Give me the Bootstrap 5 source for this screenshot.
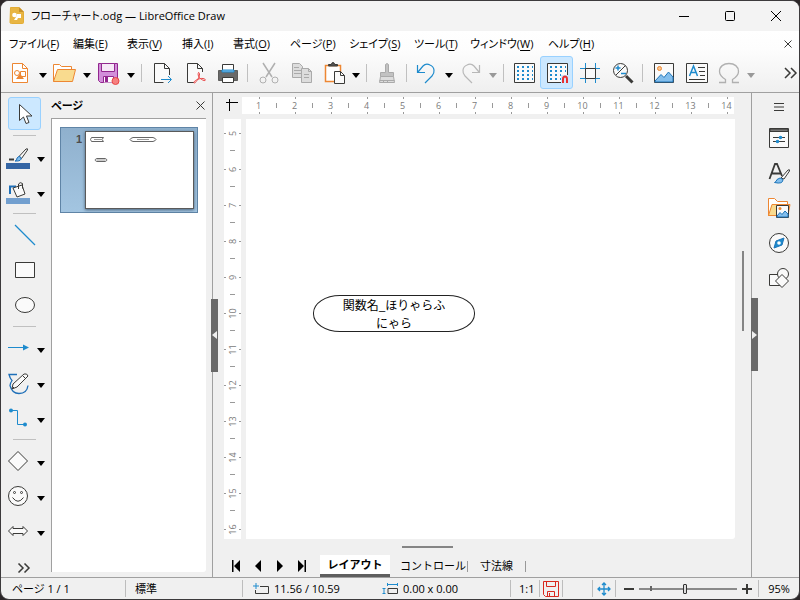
<!DOCTYPE html>
<html lang="ja">
<head>
<meta charset="utf-8">
<meta name="viewport" content="width=device-width, initial-scale=1">
<title>フローチャート.odg — LibreOffice Draw</title>
<link href="https://cdn.jsdelivr.net/npm/bootstrap@5.3.0/dist/css/bootstrap.min.css" rel="stylesheet">
<style>
:root { --line: #a0a0a0; --face: #f0f0f0; --ink: #3a3a38; --blue: #1e8bcd; }
html, body { height: 100%; }
body { background: #2b2628; font: 11px/16px "Open Sans", "Noto Sans CJK JP", sans-serif; font-feature-settings: "palt"; color: #000; overflow: hidden; }
button, a { color: inherit; text-decoration: none; }
button { border: 0; background: none; padding: 0; }
svg { display: block; fill: none; stroke: var(--ink); flex: none; }
.app-window { border: 1px solid #3c3a3c; border-radius: 9px; background: var(--face); overflow: hidden; }
.title-bar { height: 30px; background: #f3f3f3; padding-left: 8px; gap: 6px; }
.caption-btn { width: 46px; height: 30px; }
.caption-btn svg { stroke: #000; }
.top-bars { background: linear-gradient(#fff, #fdfdfd 30%, #efefef); border-bottom: 1px solid var(--line); }
.menu-strip { height: 25px; padding-left: 8px; display: grid; grid-template-columns: 64px 54px 55px 51px 57px 59px 65px 56px 78px 1fr auto; }
.menu-strip u { text-underline-offset: 2px; }
.menu-strip button { margin-right: 7px; }
.tool-strip { height: 36px; padding-left: 3px; padding-bottom: 3px; }
.tool { width: 33px; height: 33px; border: 1px solid transparent; border-radius: 3px; display: flex; align-items: center; justify-content: center; flex: none; }
.tool.on { background: #cce8ff; border-color: #99d1ff; }
.drop { width: 11px; height: 33px; display: flex; align-items: center; justify-content: center; flex: none; }
.drop::after { content: ""; border: 4px solid transparent; border-top: 5px solid #000; border-bottom: 0; margin-top: 5px; }
.drop:disabled::after { border-top-color: #999; }
.gap-line { width: 7px; height: 18px; flex: none; background: linear-gradient(#c0c0c0, #c0c0c0) center / 1px 100% no-repeat; }
.drop + .gap-line { margin-left: 2px; }
.draw-tools { width: 50px; padding-top: 3px; }
.draw-row { height: 35px; display: flex; align-items: center; flex: none; }
.draw-row .tool { margin-left: 7px; }
.draw-row.split .tool { margin-left: 0; }
.draw-row .drop { margin-left: 1px; }
.rule-h { height: 8px; width: 23px; margin-left: 12px; flex: none; background: linear-gradient(#c0c0c0, #c0c0c0) center / 100% 1px no-repeat; }
.page-panel { width: 155px; padding-bottom: 5px; }
.panel-head { height: 25px; }
.page-list { background: #fff; border-left: 1px solid var(--line); border-top: 1px solid var(--line); border-bottom-right-radius: 3px; padding: 8px; }
.page-thumb { border: 1px solid #5f84a6; background: linear-gradient(#8fb0cd, #a3c5e1); padding: 3px; height: 86px; }
.page-thumb b { width: 21px; color: #4c4c4c; text-align: right; padding-right: 3px; font: bold 11px/16px "Liberation Sans", sans-serif; }
.page-sheet { background: #fff; border: 1px solid #5a5a5a; box-shadow: 0 1px 3px #47617a; }
.splitter { width: 14px; flex: none; background: linear-gradient(var(--line), var(--line)) 6px 0 / 1px 100% no-repeat; padding-left: 5px; }
.grip { width: 7px; height: 73px; background: #696969; display: flex; align-items: center; justify-content: center; }
.grip svg { stroke: none; fill: #f0f0f0; }
.editor { padding-top: 4px; }
.ruler-row { margin-bottom: 5px; }
.corner { width: 22px; }
.ruler-h { height: 17px; background: #fff; overflow: hidden; margin-right: 17px; color: #7b7b7b; font-size: 9px; }
.ruler-h span { flex: none; width: 36px; padding-right: 1px; text-align: center; line-height: 17px;
  background: linear-gradient(#999,#999) 18px 0 / 1px 2px no-repeat, linear-gradient(#999,#999) 18px 100% / 1px 2px no-repeat, linear-gradient(#999,#999) 100% 6px / 1px 5px no-repeat; }
.ruler-h span:first-child { margin-left: -1px; }
.ruler-v { width: 17px; margin: 0 5px 0 4px; background: #fff; overflow: hidden; color: #7b7b7b; font-size: 9px; }
.ruler-v span { flex: none; height: 36px; display: flex; align-items: center; justify-content: center;
  background: linear-gradient(#999,#999) 0 18px / 2px 1px no-repeat, linear-gradient(#999,#999) 100% 18px / 2px 1px no-repeat, linear-gradient(#999,#999) 6px 100% / 5px 1px no-repeat; }
.ruler-v span:first-child { margin-top: -4px; }
.ruler-v i { font-style: normal; line-height: 17px; transform: rotate(-90deg); }
.sheet { background: #fff; border-bottom-right-radius: 3px; }
.terminator { position: absolute; left: 67px; top: 176px; width: 162px; height: 37px; border: 1px solid #222; border-radius: 27px / 18px; font: 12px/18px "Noto Sans CJK JP", sans-serif; text-align: center; }
.scroll-v { width: 16px; padding: 132px 0 0 7px; }
.scroll-v div { width: 2px; height: 80px; background: #858585; }
.scroll-h { height: 16px; padding: 7px 0 0 182px; }
.scroll-h div { width: 51px; height: 2px; background: #858585; }
.layer-tabs { height: 22px; padding-left: 5px; }
.layer-tabs > button:not(.layer) { width: 22px; height: 20px; display: flex; align-items: center; justify-content: center; }
.layer-tabs svg { fill: #000; stroke: none; }
.layer { height: 22px; padding: 0 1px; margin-left: 9px; }
.tab-line + .layer { margin: 0 11px; }
.layer.current { background: #fff; border-bottom: 3px solid #5f5f5f; padding: 0; width: 70px; margin-left: 7px; font-weight: 600; }
.tab-line { width: 1px; height: 11px; background: #999; }
.side-bar { width: 48px; border-left: 1px solid var(--line); padding-left: 7px; }
.side-bar .grip { position: absolute; left: -1px; top: 50%; margin-top: -37px; }
.side-bar > button:not(.grip) { height: 35px; display: flex; align-items: center; justify-content: center; }
.side-bar > button.side-menu { height: 27px; }
.status { height: 22px; border-top: 1px solid var(--line); }
.status > * { height: 17px; display: flex; align-items: center; flex: none; }
.status > * + * { border-left: 1px solid #bdbdbd; }
.s-page { width: 124px; padding-left: 11px; }
.s-style { width: 117px; padding-left: 9px; }
.s-pos { width: 268px; padding-left: 10px; gap: 5px; }
.s-pos span + svg { margin-left: auto; }
.s-pos span:last-child { width: 107px; }
.s-scale { width: 29px; padding-left: 8px; }
.s-save { width: 23px; justify-content: center; }
.s-sign { width: 30px; }
.s-fit { width: 23px; justify-content: center; }
.s-zoom { width: 143px; padding-left: 8px; gap: 5px; }
.zoom-range { -webkit-appearance: none; appearance: none; width: 98px; height: 12px; margin: 0; background: linear-gradient(#666,#666) 11px 50% / 2px 5px no-repeat, linear-gradient(#8a8a8a,#8a8a8a) center / 100% 2px no-repeat; }
.zoom-range::-webkit-slider-thumb { -webkit-appearance: none; width: 4px; height: 10px; border: 1px solid #333; border-radius: 1px; background: #ddd; }
</style>
<script src="https://cdn.jsdelivr.net/npm/bootstrap@5.3.0/dist/js/bootstrap.bundle.min.js"></script>
</head>
<body>
<div class="app-window d-flex flex-column h-100">
  <header class="title-bar d-flex align-items-center">
    <svg width="16" height="18" viewBox="0 0 16 18"><path d="M1.500 0.500H10L14.500 5V15.500Q14.500 16.500 13.500 16.500H2.500Q1 16.500 1 15.500Z" fill="#e8b543" stroke="#e3ad35"/><path d="M10 0V5H15Z" fill="#c8922a" stroke="none"/><circle cx="5.500" cy="8" r="2.300" fill="#fff" stroke="none"/><path d="M8 7h4v4H9l-1 2H5l2-3z" fill="#fff" stroke="none"/></svg>
    <span>フローチャート.odg — LibreOffice Draw</span>
    <div class="ms-auto d-flex">
      <button class="caption-btn" aria-label="最小化"><svg class="m-auto" width="12" height="12"><path d="M1 6.500h10"/></svg></button>
      <button class="caption-btn" aria-label="最大化"><svg class="m-auto" width="12" height="12"><rect x="1.500" y="1.500" width="9" height="9" rx="1"/></svg></button>
      <button class="caption-btn" aria-label="閉じる"><svg class="m-auto" width="12" height="12"><path d="M1 1l10 10M11 1L1 11"/></svg></button>
    </div>
  </header>

  <div class="top-bars">
    <nav class="menu-strip align-items-center" aria-label="メニュー">
      <a href="#">ファイル(<u>F</u>)</a><a href="#">編集(<u>E</u>)</a><a href="#">表示(<u>V</u>)</a><a href="#">挿入(<u>I</u>)</a><a href="#">書式(<u>O</u>)</a><a href="#">ページ(<u>P</u>)</a><a href="#">シェイプ(<u>S</u>)</a><a href="#">ツール(<u>T</u>)</a><a href="#">ウィンドウ(<u>W</u>)</a><a href="#">ヘルプ(<u>H</u>)</a>
      <button aria-label="文書を閉じる"><svg width="8" height="8"><path d="M.500 .500l7 7M7.500 .500l-7 7"/></svg></button>
    </nav>
    <div class="tool-strip d-flex align-items-center" role="toolbar">
      <button class="tool" aria-label="新規"><svg width="24" height="24"><path d="M3.500 2.500h10l5 5v14h-15z" fill="#fff" stroke="#ed8733"/><path d="M13.500 2.500v5h5" stroke="#ed8733"/><circle cx="8" cy="12" r="2.500" stroke="#ed8733"/><path d="M11.500 10.500h5v5h-5z" stroke="#ed8733"/><path d="M11 12.500l4 5.500H7z" fill="#ed8733" stroke="none"/></svg></button><button class="drop" aria-label="新規の一覧"></button>
      <button class="tool" aria-label="開く"><svg width="24" height="24"><path d="M.500 20.500v-17h6l2 2h10v3" fill="#fff" stroke="#ed8733"/><path d="M.500 20.500l4-12h18l-3 12z" fill="#f9db8f" stroke="#ed8733"/></svg></button><button class="drop" aria-label="最近使ったファイル"></button>
      <button class="tool" aria-label="保存"><svg width="24" height="24"><path d="M1.500 2.500h19v19H3.500l-2-2z" fill="#d28fda" stroke="#92278f"/><path d="M4.500 2.500h13v8h-13z" fill="#f6e8f7" stroke="#92278f"/><path d="M6.500 21.500v-6h10v6" fill="#fff" stroke="#92278f"/><path d="M8 16h3v5H8z" fill="#92278f" stroke="none"/><circle cx="18.500" cy="20" r="3.500" fill="#f58080" stroke="#e84545"/></svg></button><button class="drop" aria-label="保存の一覧"></button>
      <span class="gap-line"></span>
      <button class="tool" aria-label="エクスポート"><svg width="24" height="24"><path d="M19.500 14V7.500l-5-5h-10v19H13" fill="#fafafa"/><path d="M14.500 2.500v5h5M4.500 21.500h9"/><path d="M11 18.500h10M18 15l3.500 3.500L18 22" stroke="#1e8bcd"/></svg></button>
      <button class="tool" aria-label="PDFとしてエクスポート"><svg width="24" height="24"><path d="M19.500 11V7.500l-5-5h-10v19H11" fill="#fafafa"/><path d="M14.500 2.500v5h5"/><path d="M15.500 11.500c2 0 1 5-1.500 8-2 3-3.500 3-3 1.500 1-2 6-4 9-3.500 3 .500 3 2.500 1 2-4-1-7-5-5.500-8z" stroke="#ea4848"/></svg></button>
      <button class="tool" aria-label="印刷"><svg width="24" height="24"><path d="M6.500 3.500h11v8h-11z" fill="#fff"/><path d="M2.500 9.500h19v10h-19z" fill="#696969" stroke="#5d5d5b"/><path d="M6 9h12v2H6z" fill="#83beec" stroke="#1e8bcd"/><path d="M6.500 16.500h11v5h-11z" fill="#fff"/></svg></button>
      <span class="gap-line"></span>
      <button class="tool" disabled aria-label="切り取り"><svg width="24" height="24"><g stroke="#b0b0b0"><path d="M7 2l9 14M19 2L10 16" stroke-width="1.500"/><circle cx="7" cy="19" r="3"/><circle cx="19" cy="19" r="3"/></g></svg></button>
      <button class="tool" disabled aria-label="コピー"><svg width="24" height="24"><g stroke="#aaa"><path d="M3.500 2.500h7l3 3v11h-10z" fill="#ddd"/><path d="M5 6.500h5M5 9.500h7M5 12.500h7"/><path d="M12.500 7.500h7l3 3v11h-10z" fill="#ddd"/><path d="M19.500 7.500v3h3M15 13.500h5M15 16.500h5"/></g></svg></button>
      <button class="tool" aria-label="貼り付け"><svg width="24" height="24"><path d="M3.500 4.500h15v16h-15z" fill="#fff" stroke="#ed8733" stroke-width="1.500"/><path d="M6.500 4.500v-1h3q0-2 1.500-2t1.500 2h3v1.500h-9z" fill="#555"/><path d="M12.500 10.500h6l4 4v8h-10z" fill="#fafafa"/><path d="M18.500 10.500v4h4"/></svg></button><button class="drop" aria-label="形式を選択"></button>
      <span class="gap-line"></span>
      <button class="tool" disabled aria-label="書式のコピー"><svg width="24" height="24"><g stroke="#aaa"><path d="M10.500 11.500v-8q1.500-2 3 0v8h5v4h-13v-4z" fill="#c2c2c2"/><path d="M5.500 15.500l-1 6h15l-1-6z" fill="#ddd"/><path d="M4.500 19.500h15M8.500 19v2M12.500 19v2"/></g></svg></button>
      <span class="gap-line"></span>
      <button class="tool" aria-label="元に戻す"><svg width="24" height="24"><path d="M2.500 4v7.500H10M3 11l5-6q3-3 7-1c5 2 5 8 2 11l-7 7" stroke="#1e8bcd" stroke-width="1.200"/></svg></button><button class="drop" aria-label="元に戻す一覧"></button>
      <button class="tool" disabled aria-label="やり直し"><svg width="24" height="24"><path d="M20.500 4v7.500H13M20 11l-5-6q-3-3-7-1c-5 2-5 8-2 11l7 7" stroke="#b8b8b8" stroke-width="1.200"/></svg></button><button class="drop" disabled aria-label="やり直し一覧"></button>
      <span class="gap-line"></span>
      <button class="tool" aria-label="グリッドの表示"><svg width="24" height="24"><path d="M2.500 2.500h20v19h-20z" fill="#fafafa"/><path d="M5 6h16M5 10h16M5 14h16M5 18h16" stroke="#1e8bcd" stroke-width="2" stroke-dasharray="2 3"/></svg></button>
      <button class="tool on" aria-label="グリッド線で位置合わせ"><svg width="24" height="24"><path d="M2.500 2.500h20v19h-20z" fill="#fafafa"/><path d="M5 6h16M5 10h16M5 14h11M5 18h11" stroke="#1e8bcd" stroke-width="2" stroke-dasharray="2 3"/><path d="M16 14h8v9h-8z" fill="#cce8ff" stroke="none"/><path d="M18 22v-4q0-2.500 2-2.500t2 2.500v4" stroke="#e83030" stroke-width="2"/></svg></button>
      <button class="tool" aria-label="補助線"><svg width="24" height="24"><path d="M7.500 2v20M17.500 2v20M2 7.500h20M2 17.500h20" stroke="#1e8bcd"/><path d="M7.500 7.500h10v10h-10z" fill="#fafafa"/></svg></button>
      <button class="tool" aria-label="ズーム"><svg width="24" height="24"><circle cx="9.500" cy="9.500" r="7" fill="#fafafa"/><path d="M15 15l6.500 6.500" stroke-width="3"/><path d="M5 14L14.500 4.500"/><path d="M7 4.500v5M4.500 7h5M10 12.500h5" stroke="#1e8bcd" stroke-width="1.500"/></svg></button>
      <span class="gap-line"></span>
      <button class="tool" aria-label="画像"><svg width="24" height="24"><path d="M3.500 2.500h19v19h-19z" fill="#fafafa"/><circle cx="8.500" cy="7.500" r="2" fill="#f9c58f" stroke="#ed8733"/><path d="M4 20l6-6.500 3 3 4.500-5.500 4.500 5v5H4z" fill="#83beec" stroke="#1e75b8"/></svg></button>
      <button class="tool" aria-label="テキストボックス"><svg width="24" height="24"><path d="M2.500 2.500h21v19h-21z" fill="#fafafa"/><path d="M5.500 15L9.500 5l4 10M7 11.500h5" stroke="#1e8bcd" stroke-width="1.500"/><path d="M14 6.500h7M15 10.500h6M16 14.500h5M5 18.500h16"/></svg></button>
      <button class="tool" disabled aria-label="特殊文字"><svg width="24" height="24"><path d="M2 21.500h6.500v-3C4.500 16 2.500 13.500 2.500 10.500c0-5 4-8 9.500-8s9.500 3 9.500 8c0 3-2 5.500-6 8v3H22" stroke="#b0b0b0" stroke-width="1.300"/></svg></button><button class="drop" disabled aria-label="特殊文字の一覧"></button>
      <button class="ms-auto me-0" aria-label="その他"><svg width="16" height="12"><path d="M2 1l5 5-5 5M8 1l5 5-5 5" stroke-width="1.500"/></svg></button>
    </div>
  </div>

  <div class="d-flex flex-fill" style="min-height:0">
    <div class="draw-tools d-flex flex-column flex-shrink-0" role="toolbar">
      <div class="draw-row"><button class="tool on" aria-label="選択"><svg width="24" height="24"><path d="M6.500 2.500v16l4-3.500 2.500 6.500 3-1-2.500-6.500h5.500z" fill="#fff"/></svg></button></div>
      <div class="rule-h"></div>
      <div class="draw-row split"><button class="tool" aria-label="線の色"><svg width="24" height="24"><path d="M0 18h24v6H0z" fill="#3465a4" stroke="none"/><path d="M3 14.500h5" stroke-width="2"/><path d="M13 11.500L20 4q2-1 1.500 1l-6 8.500z" fill="#fafafa"/><path d="M9 16q2 0 2-3 2-3 4-.500 1 4-6 3.500z" fill="#83beec" stroke="#1e6fb8"/></svg></button><button class="drop" aria-label="線の色の一覧"></button></div>
      <div class="draw-row split"><button class="tool" aria-label="塗りつぶし色"><svg width="24" height="24"><path d="M0 18h24v6H0z" fill="#729fcf" stroke="none"/><path d="M4 14V6.500h6" stroke="#1e6fb8" stroke-width="2"/><path d="M7 8l9-3 3 9-8 3z" fill="#fafafa"/><path d="M12.500 9V4q1.500-2.500 4-.500v5"/></svg></button><button class="drop" aria-label="塗りつぶし色の一覧"></button></div>
      <div class="rule-h"></div>
      <div class="draw-row"><button class="tool" aria-label="線"><svg width="24" height="24"><path d="M2 2l20 20" stroke="#1e8bcd" stroke-width="1.200"/></svg></button></div>
      <div class="draw-row"><button class="tool" aria-label="四角形"><svg width="24" height="24"><path d="M2.500 4.500h19v15h-19z" fill="#fafafa"/></svg></button></div>
      <div class="draw-row"><button class="tool" aria-label="楕円"><svg width="24" height="24"><ellipse cx="12" cy="12" rx="9.500" ry="7.500" fill="#fafafa"/></svg></button></div>
      <div class="rule-h"></div>
      <div class="draw-row split"><button class="tool" aria-label="線と矢印"><svg width="24" height="24"><path d="M2 11.500h16" stroke="#1e8bcd"/><path d="M17 8.500l6 3-6 3z" fill="#1e8bcd" stroke="none"/></svg></button><button class="drop" aria-label="矢印の一覧"></button></div>
      <div class="draw-row split"><button class="tool" aria-label="曲線と多角形"><svg width="24" height="24"><path d="M11 3.500H3q1 4 3 6-2 3-2 5 2 8 9 8 8 0 9-8" stroke="#1e6fb8" stroke-width="1.300"/><path d="M6 18l1-5L18 3q3-1 4 2L11 16z" fill="#fafafa"/><path d="M17 5l3 3M6 18l2-2"/></svg></button><button class="drop" aria-label="曲線の一覧"></button></div>
      <div class="draw-row split"><button class="tool" aria-label="コネクタ"><svg width="24" height="24"><path d="M5 4.500h6.500v14H19" stroke="#1e8bcd"/><circle cx="5" cy="4.500" r="2" fill="#1e8bcd" stroke="none"/><circle cx="19" cy="18.500" r="2" fill="#1e8bcd" stroke="none"/></svg></button><button class="drop" aria-label="コネクタの一覧"></button></div>
      <div class="rule-h"></div>
      <div class="draw-row split"><button class="tool" aria-label="基本図形"><svg width="24" height="24"><path d="M12 2.500l9.500 9.500-9.500 9.500L2.500 12z" fill="#fafafa"/></svg></button><button class="drop" aria-label="基本図形の一覧"></button></div>
      <div class="draw-row split"><button class="tool" aria-label="記号図形"><svg width="24" height="24"><circle cx="12" cy="12" r="9.500" fill="#fafafa"/><circle cx="8.500" cy="8.500" r="1"/><circle cx="15.500" cy="8.500" r="1"/><path d="M6.500 13.500q5.500 7.500 11 0"/></svg></button><button class="drop" aria-label="記号図形の一覧"></button></div>
      <div class="draw-row split"><button class="tool" aria-label="ブロック矢印"><svg width="24" height="24"><path d="M2.500 12L7 7.500v2h10v-2l4.500 4.500-4.500 4.500v-2H7v2z" fill="#fafafa"/></svg></button><button class="drop" aria-label="ブロック矢印の一覧"></button></div>
      <button class="mt-auto mb-1 ms-3 align-self-start" aria-label="その他のツール"><svg width="14" height="10"><path d="M1.500 .500L6 5 1.500 9.500M7.500 .500L12 5 7.500 9.500" stroke-width="1.500"/></svg></button>
    </div>

    <section class="page-panel d-flex flex-column flex-shrink-0">
      <div class="panel-head d-flex align-items-center justify-content-between"><strong class="fw-semibold">ページ</strong><button aria-label="パネルを閉じる"><svg width="10" height="9"><path d="M.500 .500l8 8M8.500 .500l-8 8"/></svg></button></div>
      <div class="page-list flex-fill">
        <div class="page-thumb d-flex"><b>1</b><div class="page-sheet flex-fill"><svg width="106" height="76"><path d="M5.500 5.500h12q-3 2 0 4h-12q-2-2 0-4zM47 5.500h20q6 2 0 4H47q-6-2 0-4zM11 26.500h8q4 1.500 0 3h-8q-4-1.500 0-3z" stroke="#666"/><path d="M8 7.500h8M51 7.500h12M11 28h8" stroke="#999"/></svg></div></div>
      </div>
    </section>
    <div class="splitter d-flex align-items-center"><button class="grip" aria-label="ページパネルを隠す"><svg width="5" height="8"><path d="M5 0v8L0 4z"/></svg></button></div>

    <main class="editor d-flex flex-column flex-fill" style="min-width:0">
      <div class="ruler-row d-flex">
        <div class="corner flex-shrink-0"><svg width="22" height="17"><path d="M6 5.500h12M9.500 2v12" stroke="#000"/></svg></div>
        <div class="ruler-h d-flex flex-fill"><span>1</span><span>2</span><span>3</span><span>4</span><span>5</span><span>6</span><span>7</span><span>8</span><span>9</span><span>10</span><span>11</span><span>12</span><span>13</span><span>14</span></div>
      </div>
      <div class="d-flex flex-fill" style="min-height:0">
        <div class="ruler-v d-flex flex-column flex-shrink-0"><span><i>5</i></span><span><i>6</i></span><span><i>7</i></span><span><i>8</i></span><span><i>9</i></span><span><i>10</i></span><span><i>11</i></span><span><i>12</i></span><span><i>13</i></span><span><i>14</i></span><span><i>15</i></span><span><i>16</i></span></div>
        <div class="sheet flex-fill position-relative"><div class="terminator">関数名_ほりゃらふ<br>にゃら</div></div>
        <div class="scroll-v flex-shrink-0"><div></div></div>
      </div>
      <div class="scroll-h"><div></div></div>
      <div class="layer-tabs d-flex align-items-center">
        <button aria-label="最初"><svg width="10" height="12"><path d="M1 0h1.500v12H1zM9 0v12L3 6z"/></svg></button><button aria-label="前"><svg width="10" height="12"><path d="M8 0v12L2 6z"/></svg></button><button aria-label="次"><svg width="10" height="12"><path d="M2 0v12l6-6z"/></svg></button><button aria-label="最後"><svg width="10" height="12"><path d="M1 0v12l6-6zM7.500 0H9v12H7.500z"/></svg></button>
        <button class="layer current">レイアウト</button><button class="layer">コントロール</button><span class="tab-line"></span><button class="layer">寸法線</button><span class="tab-line"></span>
      </div>
    </main>

    <aside class="side-bar position-relative d-flex flex-column flex-shrink-0">
      <button class="grip" aria-label="サイドバーを隠す"><svg width="5" height="8"><path d="M0 0v8l5-4z"/></svg></button>
      <button class="side-menu" aria-label="サイドバーの設定"><svg width="10" height="8"><path d="M0 .500h10M0 4h10M0 7.500h10"/></svg></button>
      <button aria-label="プロパティ"><svg width="24" height="24"><path d="M2.500 2.500h19v19h-19z" fill="#fafafa"/><path d="M3 3h18v2.500H3z" fill="#777"/><path d="M6 11.500h12M6 15.500h12"/><circle cx="13.500" cy="11.500" r="1.800" fill="#1e8bcd" stroke="none"/><circle cx="10.500" cy="15.500" r="1.800" fill="#1e8bcd" stroke="none"/></svg></button>
      <button aria-label="スタイル"><svg width="24" height="24"><path d="M2.500 18L8 3h2l5 12M5 12.500h9" stroke-width="1.800"/><path d="M14 17l7-8q2-1 1.500 1l-5.500 8z" fill="#fafafa"/><path d="M7.500 21.500q2-1 2.500-3 3-3 6 0 0 5-8.500 3z" fill="#83beec" stroke="#1e75b8"/></svg></button>
      <button aria-label="ギャラリー"><svg width="24" height="24"><path d="M1.500 20V2.500h6l3 3h10v3" fill="#fff" stroke="#ed8733"/><path d="M1.500 19.500L5 8.500h18l-2 11z" fill="#f9db8f" stroke="#ed8733"/><path d="M9.500 9.500h12v12h-12z" fill="#fafafa"/><circle cx="13" cy="12.500" r="1.500" fill="#ed8733" stroke="none"/><path d="M10 20l3-3.500 2 2 3-3.500 3 3v3H10z" fill="#83beec" stroke="#1e75b8"/></svg></button>
      <button aria-label="ナビゲーター"><svg width="24" height="24"><circle cx="12" cy="12" r="9.500" fill="#fafafa"/><path d="M17 7l-2 7-8 3 2-7z" fill="#1e8bcd" stroke="#1e75b8"/><circle cx="12" cy="12" r="1.800" fill="#fff" stroke="none"/></svg></button>
      <button aria-label="図形"><svg width="24" height="24"><path d="M2.500 8.500h12v11h-12z" fill="#fafafa"/><circle cx="16" cy="8" r="5.500" fill="#fafafa"/><path d="M15 8.500l6.500 6.500-6.500 6.500L8.500 15z" fill="#fafafa"/></svg></button>
    </aside>
  </div>

  <footer class="status d-flex align-items-center">
    <div class="s-page">ページ 1 / 1</div>
    <div class="s-style">標準</div>
    <div class="s-pos"><svg width="16" height="12"><path d="M7 3.500h8.500v7h-13V7"/><path d="M3 0v6M0 3h6" stroke="#1e8bcd"/></svg><span>11.56 / 10.59</span><svg width="16" height="12"><path d="M6 5.500h9.500v5H6z"/><path d="M5.500 1.500h10M5.500 0v3M15.500 0v3M2 5.500v5M.500 5.500h3M.500 10.500h3" stroke="#1e8bcd"/></svg><span>0.00 x 0.00</span></div>
    <div class="s-scale">1:1</div>
    <div class="s-save"><svg width="16" height="16"><path d="M.500 .500h15v15H2.500l-2-2zM3.500 .500v5h9v-5M4.500 15.500v-5h7v5M6.500 12v3" stroke="#d9281e"/></svg></div>
    <div class="s-sign"></div>
    <div class="s-fit"><svg width="14" height="14"><path d="M7 1v12M1 7h12M5 3l2-2 2 2M5 11l2 2 2-2M3 5L1 7l2 2M11 5l2 2-2 2" stroke="#1e8bcd" stroke-width="1.300"/></svg></div>
    <div class="s-zoom"><button aria-label="縮小"><svg width="10" height="10"><path d="M0 5h10" stroke-width="2"/></svg></button><input class="zoom-range" type="range" min="0" max="100" value="47" aria-label="ズーム"><button aria-label="拡大"><svg width="10" height="10"><path d="M0 5h10M5 0v10" stroke-width="2"/></svg></button></div>
    <div class="flex-fill justify-content-center">95%</div>
  </footer>
</div>
</body>
</html>
